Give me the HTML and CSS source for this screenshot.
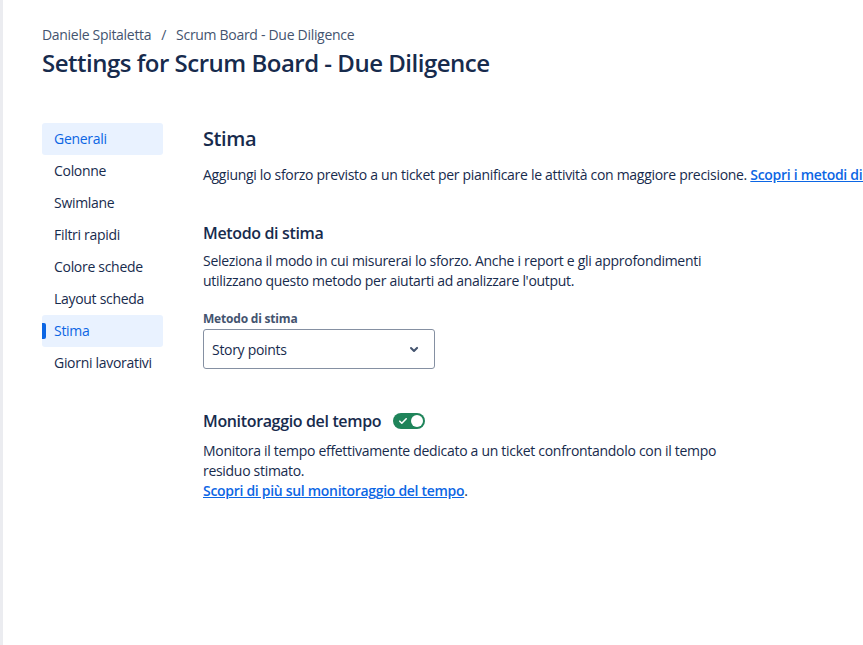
FILE: index.html
```html
<!DOCTYPE html>
<html lang="it">
<head>
<meta charset="utf-8">
<link rel="stylesheet" href="styles.css">
</head>
<body>
<div class="shell">
  <div class="edge"></div>
  <main class="page">
    <header class="head">
      <nav class="crumbs"><span>Daniele Spitaletta</span><span class="sep">/</span><span>Scrum Board - Due Diligence</span></nav>
      <h1 class="title">Settings for Scrum Board - Due Diligence</h1>
    </header>
    <div class="body">
      <ul class="side">
        <li class="item hl">Generali</li>
        <li class="item">Colonne</li>
        <li class="item">Swimlane</li>
        <li class="item">Filtri rapidi</li>
        <li class="item">Colore schede</li>
        <li class="item">Layout scheda</li>
        <li class="item hl active">Stima</li>
        <li class="item">Giorni lavorativi</li>
      </ul>
      <section class="content">
        <h2 class="h2">Stima</h2>
        <p class="lead">Aggiungi lo sforzo previsto a un ticket per pianificare le attività con maggiore precisione. <a class="link" href="#">Scopri i metodi di stima</a></p>

        <h3 class="h3 mt1">Metodo di stima</h3>
        <p class="para">Seleziona il modo in cui misurerai lo sforzo. Anche i report e gli approfondimenti utilizzano questo metodo per aiutarti ad analizzare l'output.</p>
        <div class="label">Metodo di stima</div>
        <div class="select"><span>Story points</span>
          <svg class="chev" width="24" height="24" viewBox="0 0 24 24"><path d="M8.3 10.3a1 1 0 0 1 1.4 0L12 12.6l2.3-2.3a1 1 0 1 1 1.4 1.4l-3 3a1 1 0 0 1-1.4 0l-3-3a1 1 0 0 1 0-1.4z" fill="#44546f"/></svg>
        </div>

        <div class="row mt2">
          <h3 class="h3">Monitoraggio del tempo</h3>
          <span class="toggle"><svg class="tick" width="10" height="10" viewBox="0 0 10 10"><path d="M1.8 5.2l2 2 4.4-4.4" stroke="#fff" stroke-width="1.6" fill="none" stroke-linecap="round" stroke-linejoin="round"/></svg><span class="knob"></span></span>
        </div>
        <p class="para mt3">Monitora il tempo effettivamente dedicato a un ticket confrontandolo con il tempo residuo stimato.<br><a class="link" href="#">Scopri di più sul monitoraggio del tempo</a>.</p>
      </section>
    </div>
  </main>
</div>
</body>
</html>
```
FILE: styles.css
```css
* { box-sizing: border-box; }
html, body { margin: 0; padding: 0; background: #fff; overflow: hidden; }
body {
  font-family: "Open Sans", "Noto Sans", sans-serif;
  color: #172b4d;
  font-size: 14px;
  letter-spacing: -0.3px;
  width: 863px;
  height: 645px;
}
.shell { display: flex; height: 645px; }
.edge { width: 3px; background: #ebecf0; flex: none; }
.page { padding: 25px 0 0 39px; flex: 1; min-width: 0; }
.crumbs { display: flex; gap: 0; font-size: 14px; color: #44546f; line-height: 20px; }
.sep { padding: 0 10px 0 10px; }
.title { margin: 2px 0 0; font-size: 24px; font-weight: 600; line-height: 32px; color: #172b4d; letter-spacing: -0.5px; }
.body { display: flex; margin-top: 44px; }
.side { list-style: none; margin: 0; padding: 0; width: 121px; flex: none; }
.item { position: relative; height: 32px; line-height: 32px; padding-left: 12px; border-radius: 3px; color: #172b4d; font-size: 14px; white-space: nowrap; }
.item.hl { background: #e9f2ff; color: #0c66e4; }
.item.active::before { content: ""; position: absolute; left: 0; top: 8px; width: 4px; height: 16px; background: #0c66e4; border-radius: 0 2px 2px 0; }
.content { margin-left: 40px; padding-top: 4px; min-width: 0; }
.h2 { margin: 0; font-size: 20px; font-weight: 600; line-height: 24px; letter-spacing: -0.4px; }
.lead { margin: 14px 0 0; line-height: 20px; white-space: nowrap; }
.link { color: #0c66e4; text-decoration: underline; font-weight: 600; }
.h3 { margin: 0; font-size: 16px; font-weight: 600; line-height: 20px; letter-spacing: -0.35px; }
.mt1 { margin-top: 38px; }
.para { margin: 8px 0 0; line-height: 20px; width: 530px; }
.label { margin-top: 20px; font-size: 12px; font-weight: 700; color: #44546f; line-height: 16px; letter-spacing: -0.2px; }
.select { margin-top: 2px; width: 232px; height: 40px; border: 1px solid #8590a2; border-radius: 3px; display: flex; align-items: center; justify-content: space-between; padding: 0 12px 0 8px; }
.chev { margin-right: -4px; }
.row { display: flex; align-items: center; gap: 12px; }
.mt2 { margin-top: 42px; }
.toggle { width: 32px; height: 16px; border-radius: 8px; background: #1f845a; display: flex; align-items: center; justify-content: space-between; padding: 0 2px 0 5px; }
.knob { width: 12px; height: 12px; border-radius: 50%; background: #fff; }
.mt3 { margin-top: 10px; }
```
